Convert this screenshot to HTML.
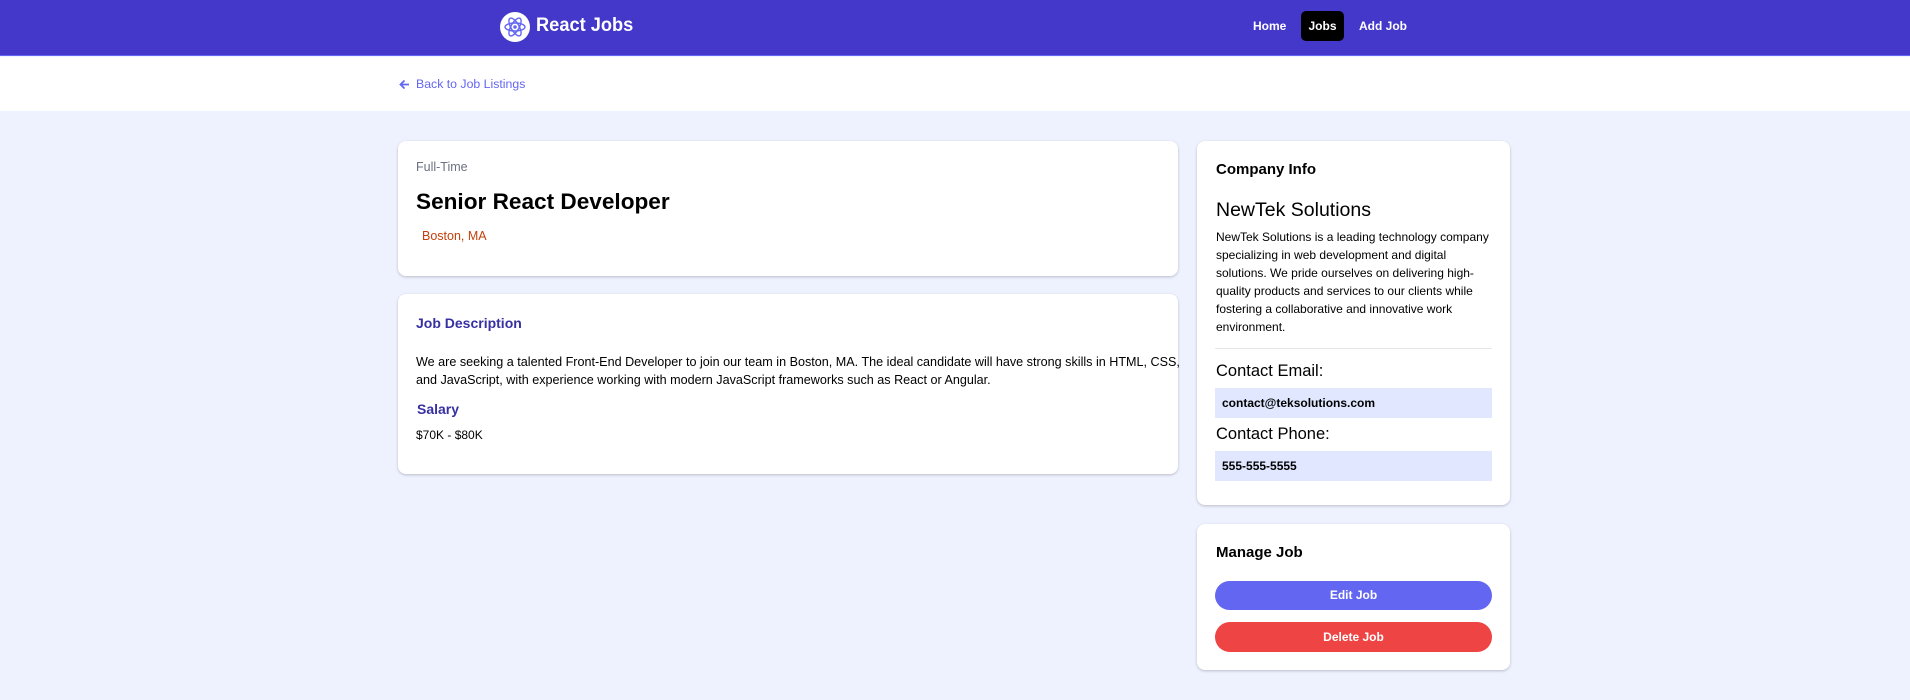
<!DOCTYPE html>
<html><head><style>
*{margin:0;padding:0;box-sizing:border-box}
body{width:1910px;height:700px;background:#eef2ff;font-family:"Liberation Sans",sans-serif;position:relative;overflow:hidden}
.a{position:absolute;white-space:nowrap}
.card{position:absolute;background:#fff;border-radius:8px;box-shadow:0 1px 3px rgba(0,0,0,.15),0 1px 2px rgba(0,0,0,.08)}
</style></head><body>
<div class="a" style="left:0;top:0;width:1910px;height:56px;background:#4338ca;border-bottom:1px solid #6366f1"></div>
<svg class="a" style="left:500px;top:12px" width="30" height="30" viewBox="0 0 30 30">
<circle cx="15" cy="15" r="15" fill="#fff"/>
<g fill="none" stroke="#6366f1" stroke-width="1.4">
<ellipse cx="15" cy="15" rx="10" ry="4"/>
<ellipse cx="15" cy="15" rx="10" ry="4" transform="rotate(60 15 15)"/>
<ellipse cx="15" cy="15" rx="10" ry="4" transform="rotate(-60 15 15)"/>
</g><circle cx="15" cy="15" r="1.8" fill="#6366f1"/></svg>
<div class="a" style="left:536px;top:15px;color:#fff;font-size:19px;font-weight:bold;transform:scaleX(0.96);transform-origin:left">React Jobs</div>
<div class="a" style="left:1253px;top:19px;color:#fff;font-size:12px;font-weight:bold">Home</div>
<div class="a" style="left:1301px;top:11px;width:43px;height:30px;background:#000;border-radius:5px;color:#fff;font-size:12px;font-weight:bold;text-align:center;line-height:30px">Jobs</div>
<div class="a" style="left:1359px;top:19px;color:#fff;font-size:12px;font-weight:bold">Add Job</div>
<div class="a" style="left:0;top:57px;width:1910px;height:54px;background:#fff"></div>
<svg class="a" style="left:399px;top:79px" width="11" height="11" viewBox="0 0 11 11"><path d="M10 5.5H1.5M5.5 1.5L1.5 5.5L5.5 9.5" fill="none" stroke="#6366f1" stroke-width="1.8"/></svg>
<div class="a" style="left:416px;top:77px;color:#6366f1;font-size:12.3px">Back to Job Listings</div>

<div class="card" style="left:398px;top:141px;width:780px;height:135px"></div>
<div class="a" style="left:416px;top:160px;color:#6b7280;font-size:12.5px">Full-Time</div>
<div class="a" style="left:416px;top:189px;color:#000;font-size:22.6px;font-weight:bold">Senior React Developer</div>
<div class="a" style="left:422px;top:229px;color:#c2410c;font-size:12.5px">Boston, MA</div>

<div class="card" style="left:398px;top:294px;width:780px;height:180px"></div>
<div class="a" style="left:416px;top:315px;color:#3730a3;font-size:14px;font-weight:bold">Job Description</div>
<div class="a" style="left:416px;top:353px;color:#000;font-size:12.6px;line-height:18px">We are seeking a talented Front-End Developer to join our team in Boston, MA. The ideal candidate will have strong skills in HTML, CSS,<br>and JavaScript, with experience working with modern JavaScript frameworks such as React or Angular.</div>
<div class="a" style="left:417px;top:401px;color:#3730a3;font-size:14px;font-weight:bold">Salary</div>
<div class="a" style="left:416px;top:428px;color:#000;font-size:12px">$70K - $80K</div>

<div class="card" style="left:1197px;top:141px;width:313px;height:364px"></div>
<div class="a" style="left:1216px;top:161px;color:#000;font-size:15px;font-weight:bold">Company Info</div>
<div class="a" style="left:1216px;top:199px;color:#000;font-size:19.5px">NewTek Solutions</div>
<div class="a" style="left:1216px;top:228px;color:#000;font-size:12px;line-height:18px">NewTek Solutions is a leading technology company<br>specializing in web development and digital<br>solutions. We pride ourselves on delivering high-<br>quality products and services to our clients while<br>fostering a collaborative and innovative work<br>environment.</div>
<div class="a" style="left:1215px;top:348px;width:277px;height:1px;background:#e5e7eb"></div>
<div class="a" style="left:1216px;top:362px;color:#000;font-size:16.5px">Contact Email:</div>
<div class="a" style="left:1215px;top:388px;width:277px;height:30px;background:#e0e7ff;padding-left:7px;line-height:30px;font-size:12px;font-weight:bold">contact@teksolutions.com</div>
<div class="a" style="left:1216px;top:425px;color:#000;font-size:16.5px">Contact Phone:</div>
<div class="a" style="left:1215px;top:451px;width:277px;height:30px;background:#e0e7ff;padding-left:7px;line-height:30px;font-size:12px;font-weight:bold">555-555-5555</div>

<div class="card" style="left:1197px;top:524px;width:313px;height:146px"></div>
<div class="a" style="left:1216px;top:544px;color:#000;font-size:15px;font-weight:bold">Manage Job</div>
<div class="a" style="left:1215px;top:581px;width:277px;height:29px;background:#6366f1;border-radius:15px;color:#fff;font-size:12px;font-weight:bold;text-align:center;line-height:29px">Edit Job</div>
<div class="a" style="left:1215px;top:622px;width:277px;height:30px;background:#ef4444;border-radius:15px;color:#fff;font-size:12px;font-weight:bold;text-align:center;line-height:30px">Delete Job</div>
</body></html>
